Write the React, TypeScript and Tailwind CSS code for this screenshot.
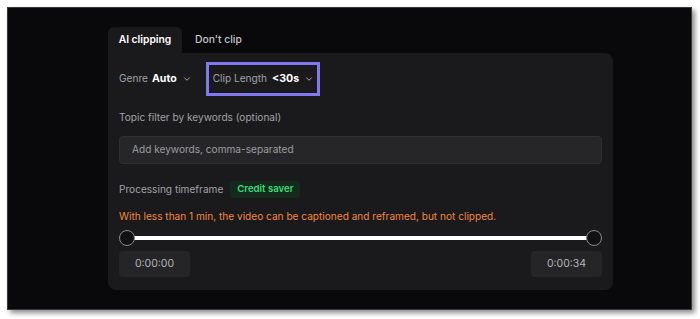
import { ChevronDown } from "lucide-react";

export default function App() {
  return (
    <div className="w-[700px] h-[319px] bg-white pt-[7px] pl-[7px] font-['Inter',sans-serif]">
      <div className="w-[685px] h-[303px] bg-[#09090b] border border-[#3a3a3c] shadow-[3px_3px_5px_rgba(0,0,0,0.45)] pt-[19px] pl-[100px]">
        {/* Tabs */}
        <div className="flex h-[26px] text-[10.3px]">
          <div className="w-[74px] rounded-t-[6px] bg-[#1a1a1c] flex items-center justify-center font-semibold text-white">
            AI clipping
          </div>
          <div className="pl-[13px] flex items-center text-[#c4c4c8] font-medium">Don't clip</div>
        </div>

        {/* Panel */}
        <div className="w-[505px] h-[237px] bg-[#1a1a1c] rounded-b-[8px] rounded-tr-[8px] px-[11px] pt-[9px] text-[10.1px]">
          <div className="flex items-center h-[34px]">
            <span className="text-[#a1a1a6]">Genre</span>
            <span className="ml-[4px] font-bold text-white text-[10.6px]">Auto</span>
            <ChevronDown size={10} strokeWidth={2} className="ml-[5px] text-[#c4c4c8]" />
            <div className="ml-[14px] h-[34px] border-[3px] border-[#8178f2] flex items-center pl-[4px] pr-[3px]">
              <span className="text-[#a1a1a6]">Clip Length</span>
              <span className="ml-[5px] font-bold text-white text-[10.6px]">&lt;30s</span>
              <ChevronDown size={10} strokeWidth={2} className="ml-[5px] text-[#c4c4c8]" />
            </div>
          </div>

          <div className="mt-[13px] leading-[16px] text-[#a1a1a6]">Topic filter by keywords (optional)</div>

          <div className="mt-[11px] h-[28px] rounded-[4px] bg-[#262628] border border-[#2f2f31] flex items-center pl-[12px] text-[#9c9ca1]">
            Add keywords, comma-separated
          </div>

          <div className="mt-[17px] flex items-center h-[17px]">
            <span className="text-[#a1a1a6]">Processing timeframe</span>
            <span className="ml-[7px] h-[17px] px-[7px] rounded-[3px] bg-[#142a1d] text-[#3ddc7a] text-[9.6px] font-semibold flex items-center">
              Credit saver
            </span>
          </div>

          <div className="mt-[10px] leading-[16px] text-[#f2873c]">
            With less than 1 min, the video can be captioned and reframed, but not clipped.
          </div>

          {/* Slider */}
          <div className="mt-[6px] relative h-[16px] flex items-center px-[7px]">
            <div className="w-full h-[4px] bg-white" />
            <div className="absolute left-0 top-0 w-[16px] h-[16px] rounded-full bg-[#111113] border-[1.5px] border-[#8a8a8e]" />
            <div className="absolute right-0 top-0 w-[16px] h-[16px] rounded-full bg-[#111113] border-[1.5px] border-[#8a8a8e]" />
          </div>

          <div className="mt-[5px] flex justify-between">
            <div className="w-[71px] h-[26px] rounded-[4px] bg-[#252527] flex items-center justify-center text-[#b4b4b8] text-[10.5px]">
              0:00:00
            </div>
            <div className="w-[71px] h-[26px] rounded-[4px] bg-[#252527] flex items-center justify-center text-[#b4b4b8] text-[10.5px]">
              0:00:34
            </div>
          </div>
        </div>
      </div>
    </div>
  );
}
